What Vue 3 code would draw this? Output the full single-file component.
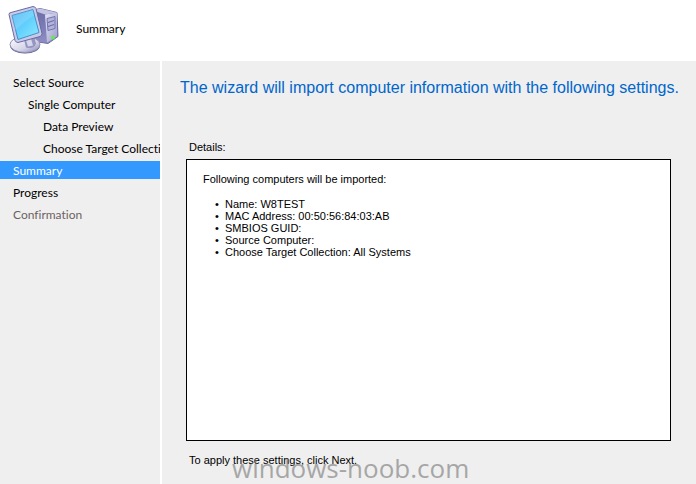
<script setup>
const steps = [
  { label: 'Select Source', level: 0 },
  { label: 'Single Computer', level: 1 },
  { label: 'Data Preview', level: 2 },
  { label: 'Choose Target Collection', level: 2 },
  { label: 'Summary', level: 0, current: true },
  { label: 'Progress', level: 0 },
  { label: 'Confirmation', level: 0, pending: true },
]

const details = [
  'Name: W8TEST',
  'MAC Address: 00:50:56:84:03:AB',
  'SMBIOS GUID:',
  'Source Computer:',
  'Choose Target Collection: All Systems',
]
</script>

<template>
  <div class="wizard">
    <header class="header">
      <svg class="logo" viewBox="0 0 52 50" aria-hidden="true">
        <defs>
          <linearGradient id="screen" x1="0" y1="0" x2="1" y2="1">
            <stop offset="0" stop-color="#4fb4f4" />
            <stop offset="0.5" stop-color="#62d0fd" />
            <stop offset="1" stop-color="#8eeaff" />
          </linearGradient>
          <linearGradient id="front" x1="0" y1="0" x2="1" y2="1">
            <stop offset="0" stop-color="#e4e4f6" />
            <stop offset="1" stop-color="#9d9dcc" />
          </linearGradient>
          <linearGradient id="side" x1="0" y1="0" x2="0" y2="1">
            <stop offset="0" stop-color="#6a6aa6" />
            <stop offset="1" stop-color="#8f8fc4" />
          </linearGradient>
          <linearGradient id="base" x1="0" y1="0" x2="1" y2="1">
            <stop offset="0" stop-color="#ffffff" />
            <stop offset="0.6" stop-color="#d5d5e8" />
            <stop offset="1" stop-color="#8585b5" />
          </linearGradient>
        </defs>
        <path d="M24 5 32 3 49 7 50 31 40 38 27 36Z" fill="url(#side)" stroke="#6c6ca4" />
        <path d="M37 9 49 7 49 31 39 37Z" fill="url(#front)" />
        <path d="M25 5 32 3 49 7 37 9Z" fill="#c3c3e2" />
        <path d="M39 13 47 11 47 23 40 25Z" fill="#b2b2da" stroke="#7474ae" />
        <path d="M40 17 46 15M40 21 46 19" stroke="#6868a4" />
        <circle cx="45" cy="32" r="2" fill="#68e653" />
        <ellipse cx="17" cy="40" rx="15" ry="8" fill="#55558f" />
        <ellipse cx="17" cy="39" rx="15" ry="8" fill="url(#base)" stroke="#9292bb" />
        <path d="M16 34 26 31 28 38Q26 44 18 42Z" fill="#9595c2" />
        <path d="M18 35 23 33 25 40 20 41Z" fill="#d6d6ec" />
        <path d="M1 9Q1 7 3 7L25 1Q27 1 28 3L34 28Q34 30 32 31L10 37Q8 37 7 35Z" fill="#c9c9e8" stroke="#6a6aa4" />
        <path d="M4 10 25 4 31 27 10 34Z" fill="url(#screen)" stroke="#438fca" />
        <path d="M4 10 25 4 26 10Q17 15 7 25Z" fill="#ffffff" opacity="0.15" />
      </svg>
      <h1 class="header-title">Summary</h1>
    </header>

    <div class="body">
      <nav class="sidebar" aria-label="Wizard steps">
        <ol class="steps">
          <li
            v-for="step in steps"
            :key="step.label"
            class="step"
            :class="['level-' + step.level, { current: step.current, pending: step.pending }]"
            :aria-current="step.current ? 'step' : undefined"
          >{{ step.label }}</li>
        </ol>
      </nav>

      <main class="content">
        <h2 class="heading">The wizard will import computer information with the following settings.</h2>
        <p id="details-label" class="caption">Details:</p>
        <section class="details" aria-labelledby="details-label">
          <p class="intro">Following computers will be imported:</p>
          <ul class="list">
            <li v-for="item in details" :key="item">{{ item }}</li>
          </ul>
        </section>
        <p class="hint">To apply these settings, click Next.</p>
        <span class="watermark">windows-noob.com</span>
      </main>
    </div>
  </div>
</template>

<style>
body {
  margin: 0;
}
</style>

<style scoped>
.wizard {
  display: flex;
  flex-direction: column;
  min-height: 100vh;
  background: #fff;
  color: #000;
  font-family: "Liberation Sans", Arial, sans-serif;
  font-size: 11px;
  line-height: 16px;
}

h1,
h2,
p,
ol,
ul {
  margin: 0;
  padding: 0;
  font-weight: 400;
}

.header {
  display: flex;
  align-items: flex-start;
  gap: 16px;
  padding: 5px 8px;
}

.logo {
  flex: none;
  width: 52px;
  height: 51px;
}

.header-title {
  padding-top: 16px;
  font-family: Lato, "Open Sans", sans-serif;
  font-size: 12px;
  line-height: 16px;
}

.body {
  display: flex;
  flex: 1;
  gap: 2px;
}

.sidebar {
  flex: none;
  width: 160px;
  padding-top: 12px;
  background: #efefef;
  font-family: Lato, "Open Sans", sans-serif;
  font-size: 12px;
  font-variant-ligatures: none;
  overflow: hidden;
}

.steps {
  display: flex;
  flex-direction: column;
  gap: 4px;
  list-style: none;
}

.step {
  padding-top: 2px;
  padding-left: 13px;
  line-height: 16px;
  white-space: nowrap;
  overflow: hidden;
}

.level-1 {
  padding-left: 28px;
}

.level-2 {
  padding-left: 43px;
}

.current {
  background: #3399ff;
  color: #fff;
}

.pending {
  color: #6d5f64;
}

.content {
  position: relative;
  display: flex;
  flex: 1;
  flex-direction: column;
  min-width: 0;
  padding: 16px 25px 16px 24px;
  background: #efefef;
}

.heading {
  margin: 0 -16px 0 -6px;
  color: #0066cc;
  font-size: 16px;
  line-height: 22px;
}

.caption {
  margin: 40px 3px 4px;
}

.details {
  flex: 1;
  padding: 11px 16px;
  border: 1px solid #000;
  background: #fff;
}

.list {
  margin-top: 11px;
  padding-left: 22px;
  line-height: 12px;
  list-style-type: "•\00a0\00a0";
}

.hint {
  margin: 11px 3px 0;
}

.watermark {
  position: absolute;
  bottom: 0;
  left: 70px;
  color: #777;
  font-family: "Open Sans", "Noto Sans", sans-serif;
  font-size: 26px;
  line-height: 32px;
  opacity: 0.6;
  pointer-events: none;
}
</style>
